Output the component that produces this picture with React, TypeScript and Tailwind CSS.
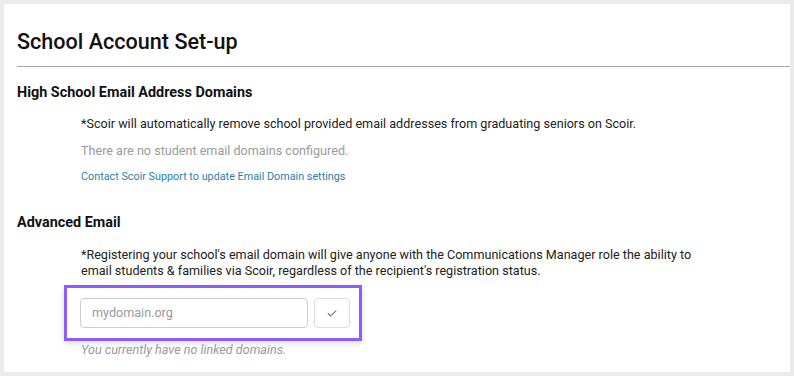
import React from "react";

export default function App() {
  return (
    <div className="w-[794px] h-[376px] bg-[#ebebeb] p-1 overflow-hidden" style={{ fontFamily: "Roboto, 'Liberation Sans', sans-serif" }}>
      <div className="bg-white h-[368px] pl-[13px] pt-[25px]">
        <h1 className="text-[21.6px] leading-[26px] font-medium text-[#111]">School Account Set-up</h1>
        <div className="mt-[11px] border-t border-[#aaaaaa]" />
        <h2 className="mt-[17px] text-[14.4px] leading-[18px] font-bold text-[#111]">High School Email Address Domains</h2>
        <div className="pl-[64px]">
          <p className="mt-[14px] text-[12.6px] leading-[16px] text-[#222]">*Scoir will automatically remove school provided email addresses from graduating seniors on Scoir.</p>
          <p className="mt-[11px] text-[12.6px] leading-[16px] text-[#9a9a9a]">There are no student email domains configured.</p>
          <a className="block mt-[11px] text-[10.8px] leading-[14px] text-[#2a7fa8]">Contact Scoir Support to update Email Domain settings</a>
        </div>
        <h2 className="mt-[30px] text-[14.4px] leading-[18px] font-bold text-[#111]">Advanced Email</h2>
        <div className="pl-[64px] w-[704px]">
          <p className="mt-[15px] text-[12.6px] leading-[16px] text-[#222]">*Registering your school's email domain will give anyone with the Communications Manager role the ability to email students &amp; families via Scoir, regardless of the recipient's registration status.</p>
        </div>
        <div className="ml-[47px] mt-[6px] w-[298px] h-[56px] border-[3px] border-[#8c5cff] shadow-[0_2px_6px_rgba(0,0,0,0.15)] flex items-center pl-[13px] gap-[6px]">
          <div className="w-[228px] h-[30px] border border-[#cccccc] rounded-[4px] flex items-center pl-[11px] text-[12.6px] text-[#9a9a9a]">mydomain.org</div>
          <div className="w-[36px] h-[30px] border border-[#dddddd] rounded-[4px] flex items-center justify-center">
            <svg width="10" height="7" viewBox="0 0 10 7" fill="none">
              <path d="M0.8 3.3l2.7 2.7 5.7-5.3" stroke="#777" strokeWidth="1.1" />
            </svg>
          </div>
        </div>
        <p className="ml-[64px] mt-[1px] text-[12.6px] leading-[16px] italic text-[#9a9a9a]">You currently have no linked domains.</p>
      </div>
    </div>
  );
}
